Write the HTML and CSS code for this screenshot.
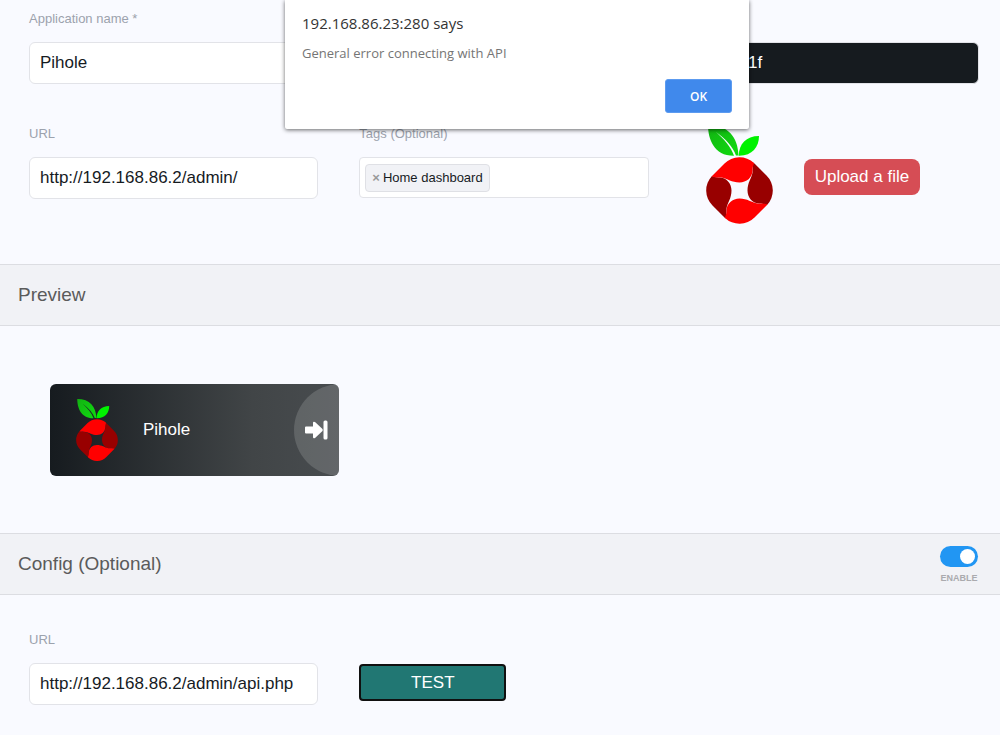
FILE: index.html
```html
<!DOCTYPE html>
<html lang="en">
<head>
    <meta charset="UTF-8">
    <meta name="viewport" content="width=device-width, initial-scale=1.0">
    <title>Edit application</title>
    <link rel="stylesheet" href="styles.css">
</head>
<body>
    <svg class="sprite" aria-hidden="true">
        <defs>
            <linearGradient id="leaf" x1="0" y1="0" x2="1" y2="1">
                <stop offset="0" stop-color="#12b212"/>
                <stop offset="1" stop-color="#10dc10"/>
            </linearGradient>
            <path id="petal" d="M-28-14L-15-27A21 21 0 0 1 14.500-27.500C14-25 13-24 13-20C13-13 7-8 0-8C-8-8-12-12-18-13C-22-13-25-13-28-14Z"/>
        </defs>
        <symbol id="pihole" viewBox="0 0 67 99">
            <path fill="url(#leaf)" d="M2 0C2 14 8 31 28 30.800C25 22 18 14 10 7C20 14 27 22 30 30.500L32.500 30.500C32 12 22 0 2 0Z"/>
            <path fill="#00f200" d="M53 11C40 11 33 19 32.700 30.700C46 31 53 22 53 11Z"/>
            <g transform="translate(33.5 65.5)">
                <use href="#petal" fill="#980000" transform="rotate(90)"/>
                <use href="#petal" fill="#980000" transform="rotate(-90)"/>
                <use href="#petal" fill="#ff0000"/>
                <use href="#petal" fill="#ff0000" transform="rotate(180)"/>
            </g>
        </symbol>
    </svg>

    <form>
        <section class="fields">
            <div class="field">
                <label for="name">Application name *</label>
                <input type="text" id="name" value="Pihole">
            </div>
            <div class="field colour-field">
                <input type="text" class="colour" value="#161b1f" aria-label="Colour">
            </div>
            <div class="field">
                <label for="url">URL</label>
                <input type="text" id="url" value="http://192.168.86.2/admin/">
            </div>
            <div class="field">
                <label for="tags">Tags (Optional)</label>
                <div class="tags">
                    <span class="tag"><button type="button" aria-label="Remove">×</button>Home dashboard</span>
                    <input type="text" id="tags">
                </div>
            </div>
            <div class="icon-field">
                <svg class="icon-large"><use href="#pihole"/></svg>
                <button type="button" class="upload">Upload a file</button>
            </div>
        </section>

        <header class="section-title">
            <h2>Preview</h2>
        </header>
        <section class="preview">
            <div class="item">
                <svg class="icon-small"><use href="#pihole"/></svg>
                <span class="title">Pihole</span>
                <a class="link" href="#" aria-label="Open">
                    <svg viewBox="0 0 23 22">
                        <path fill="#fff" d="M1 7.500H8V4Q8 2 10 3L17.500 10Q18 11 17.500 12L10 19Q8 20 8 18V14.500H1Q0 14.500 0 13.500V8.500Q0 7.500 1 7.500Z"/>
                        <rect x="18.500" y="1.500" width="4" height="19" rx="1.500" fill="#fff"/>
                    </svg>
                </a>
            </div>
        </section>

        <header class="section-title">
            <h2>Config (Optional)</h2>
            <div class="enable">
                <input type="checkbox" id="enable" checked>
                <label for="enable">ENABLE</label>
            </div>
        </header>
        <section class="fields config">
            <div class="field">
                <label for="config-url">URL</label>
                <input type="text" id="config-url" value="http://192.168.86.2/admin/api.php">
            </div>
            <div class="test-field">
                <button type="button" class="test">TEST</button>
            </div>
        </section>
    </form>

    <div class="alert" role="alertdialog" aria-labelledby="alert-title">
        <h1 id="alert-title">192.168.86.23:280 says</h1>
        <p>General error connecting with API</p>
        <button type="button">OK</button>
    </div>
</body>
</html>
```
FILE: styles.css
```css
* {
    box-sizing: border-box;
}

body {
    margin: 0;
    background: #f9faff;
    color: #161b1f;
    font-family: "Liberation Sans", Arial, sans-serif;
    font-size: 17px;
}

button, input {
    font: inherit;
}

.sprite {
    position: absolute;
    width: 0;
    height: 0;
}

.fields {
    display: grid;
    grid-template-columns: repeat(3, minmax(0, 1fr));
    gap: 40px 41px;
    padding: 9px 21px 65px 29px;
}

.field label {
    display: block;
    margin-bottom: 13px;
    color: #9ca2ad;
    font-size: 13px;
    line-height: 20px;
}

.field input {
    display: block;
    width: 100%;
    height: 42px;
    padding: 0 10px;
    border: 1px solid #e2e3e8;
    border-radius: 6px;
    background: #fff;
    color: #161b1f;
}

.colour-field {
    grid-column: 3;
    align-self: end;
}

.field .colour {
    background: #161b1f;
    color: #fff;
}

.tags {
    display: flex;
    align-items: center;
    height: 41px;
    padding: 0 5px;
    border: 1px solid #e2e3e8;
    border-radius: 4px;
    background: #fff;
}

.tags input {
    flex: 1;
    width: auto;
    min-width: 0;
    height: 30px;
    border: none;
}

.tag {
    display: flex;
    align-items: center;
    height: 28px;
    padding: 0 6px;
    border: 1px solid #dfe0e5;
    border-radius: 4px;
    background: #f1f2f6;
    font-size: 13px;
    white-space: nowrap;
}

.tag button {
    padding: 0 3px 0 0;
    border: none;
    background: none;
    color: #999;
    font-weight: bold;
}

.icon-field {
    display: flex;
    align-items: flex-start;
    gap: 31px;
    padding: 1px 16px 0;
}

.icon-large {
    width: 67px;
    height: 99px;
    margin-bottom: -25px;
}

.upload {
    height: 36px;
    margin-top: 34px;
    padding: 0 11px;
    border: none;
    border-radius: 8px;
    background: #d64d55;
    color: #fff;
    white-space: nowrap;
}

.section-title {
    display: flex;
    align-items: center;
    justify-content: space-between;
    height: 62px;
    padding: 0 22px 0 18px;
    border: solid #dcdde2;
    border-width: 1px 0;
    background: #f1f2f6;
}

.section-title h2 {
    margin: 0;
    color: #5b5b5b;
    font-size: 19px;
    font-weight: normal;
}

.preview {
    padding: 58px 50px 57px;
}

.item {
    position: relative;
    display: flex;
    align-items: center;
    gap: 25px;
    width: 289px;
    height: 92px;
    padding: 0 26px;
    border-radius: 6px;
    background: linear-gradient(90deg, #161b1f, #414547 70%, #484c4f);
    color: #fff;
    overflow: hidden;
}

.icon-small {
    width: 42px;
    height: 62px;
}

/* half circle on the right edge of the tile */
.link {
    position: absolute;
    top: 0;
    right: -47px;
    display: flex;
    align-items: center;
    width: 92px;
    height: 92px;
    padding-left: 11px;
    border-radius: 50%;
    background: rgba(255, 255, 255, 0.15);
}

.link svg {
    width: 23px;
    height: 22px;
}

.enable {
    display: flex;
    flex-direction: column;
    align-items: center;
    gap: 5px;
    padding-top: 2px;
}

.enable input {
    display: flex;
    align-items: center;
    justify-content: flex-end;
    width: 38px;
    height: 21px;
    margin: 0;
    padding: 3px;
    border-radius: 11px;
    background: #2196f3;
    appearance: none;
}

.enable input::before {
    content: "";
    width: 15px;
    height: 15px;
    border-radius: 50%;
    background: #fff;
}

.enable label {
    color: #aaaaae;
    font-size: 9px;
    font-weight: bold;
    line-height: 12px;
}

.config {
    padding-top: 35px;
    padding-bottom: 30px;
}

.test-field {
    padding-top: 34px;
}

.test {
    width: 147px;
    height: 37px;
    padding: 0;
    border: 2px solid #101010;
    border-radius: 4px;
    background: #217773;
    color: #fff;
}

.alert {
    position: absolute;
    top: 0;
    left: 285px;
    display: flex;
    flex-direction: column;
    width: 464px;
    height: 129px;
    padding: 13px 17px 16px;
    border-radius: 0 0 2px 2px;
    background: #fff;
    box-shadow: 0 1px 4px rgba(0, 0, 0, 0.6);
    font-family: "Open Sans", "Noto Sans", sans-serif;
}

.alert h1 {
    margin: 0 0 10px;
    color: #333;
    font-size: 15px;
    font-weight: normal;
    line-height: 20px;
}

.alert p {
    margin: 0;
    color: #757575;
    font-size: 13px;
    line-height: 20px;
}

.alert button {
    align-self: flex-end;
    width: 67px;
    height: 34px;
    margin-top: auto;
    border: 1px solid #5c9bf0;
    border-radius: 3px;
    background: #4089ec;
    color: #fff;
    font-size: 12px;
    font-weight: 600;
}
```
